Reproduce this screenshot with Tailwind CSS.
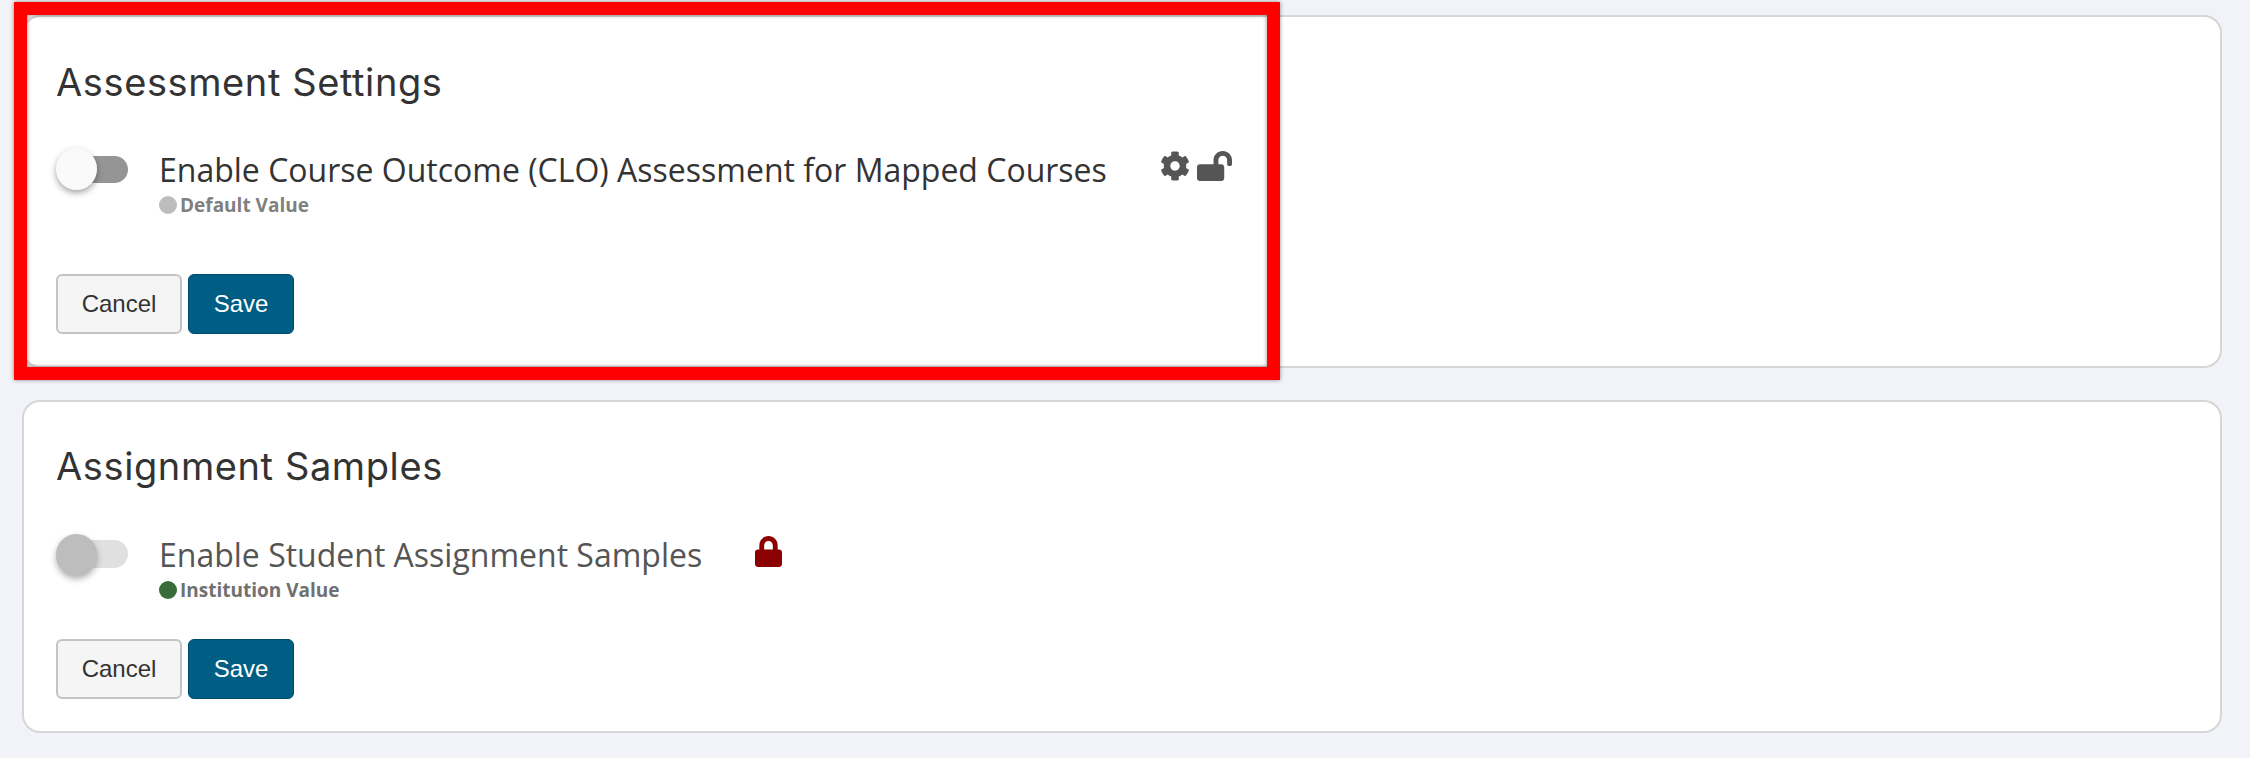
<!DOCTYPE html>
<html lang="en">
<head>
<meta charset="UTF-8">
<script src="https://cdn.jsdelivr.net/npm/@tailwindcss/browser@4"></script>
<title>Assessment Settings</title>
</head>
<body class="relative h-[758px] w-[2250px] overflow-hidden bg-[#f1f3f8]">
	<main class="flex flex-col gap-[32px] pl-[22px] pt-[15px]">
		<!-- Assessment card -->
		<section class="flex h-[353px] w-[2200px] flex-col rounded-[18px] border-2 border-[#d6d6d6] bg-white pl-[32px]">
			<h2 class="mt-[43px] font-['Inter',sans-serif] text-[38px] leading-[44px] tracking-[0.6px] text-[#333]">Assessment Settings</h2>
			<div class="mt-[44px] flex items-start">
				<div class="relative h-[44px] w-[72px] shrink-0">
					<div class="absolute left-[19px] top-[8px] h-[27px] w-[53px] rounded-full bg-[#959595]"></div>
					<div class="absolute left-0 top-0 h-[42px] w-[41px] rounded-full bg-[#fafafa] shadow-[0_3px_6px_rgba(0,0,0,0.35)]"></div>
				</div>
				<div class="ml-[31px] w-[1001px]">
					<p class="font-['Open_Sans',sans-serif] text-[32px] leading-[44px] text-[#333]">Enable Course Outcome (CLO) Assessment for Mapped Courses</p>
					<div class="mt-[1px] flex items-center gap-[3px]">
						<span class="h-[18px] w-[18px] rounded-full bg-[#bdbdbd]"></span>
						<span class="font-['Open_Sans',sans-serif] text-[19px] leading-[24px] font-bold text-[#808080]">Default Value</span>
					</div>
				</div>
				<div class="mt-[3px] flex items-start gap-[7px] text-[#555]">
					<svg class="h-[30px] w-[30px]" viewBox="0 0 512 512" fill="currentColor"><path d="M487.4 315.7l-42.6-24.6c4.3-23.2 4.3-47 0-70.2l42.6-24.6c4.9-2.8 7.1-8.6 5.5-14-11.1-35.6-30-67.8-54.7-94.6-3.8-4.1-10-5.1-14.8-2.3L380.8 110c-17.9-15.4-38.5-27.3-60.8-35.1V25.8c0-5.6-3.9-10.5-9.4-11.7-36.7-8.2-74.3-7.8-109.2 0-5.5 1.2-9.4 6.1-9.4 11.7V75c-22.2 7.9-42.8 19.8-60.8 35.1L88.7 85.5c-4.9-2.8-11-1.9-14.8 2.3-24.7 26.7-43.6 58.9-54.7 94.6-1.7 5.4.6 11.2 5.5 14L67.3 221c-4.3 23.2-4.3 47 0 70.2l-42.6 24.6c-4.9 2.8-7.1 8.6-5.5 14 11.1 35.6 30 67.8 54.7 94.6 3.8 4.1 10 5.1 14.8 2.3l42.6-24.6c17.9 15.4 38.5 27.3 60.8 35.1v49.2c0 5.6 3.9 10.5 9.4 11.7 36.7 8.2 74.3 7.8 109.2 0 5.5-1.2 9.4-6.1 9.4-11.7v-49.2c22.2-7.9 42.8-19.8 60.8-35.1l42.6 24.6c4.9 2.8 11 1.9 14.8-2.3 24.7-26.7 43.6-58.9 54.7-94.6 1.5-5.5-.7-11.3-5.6-14.1zM256 336c-44.1 0-80-35.9-80-80s35.9-80 80-80 80 35.9 80 80-35.9 80-80 80z"/></svg>
					<svg class="h-[30px] w-[35px]" viewBox="0 0 576 512" fill="currentColor" preserveAspectRatio="none"><path d="M423.5 0C339.5.3 272 69.5 272 153.5V224H48c-26.5 0-48 21.5-48 48v192c0 26.5 21.5 48 48 48h352c26.5 0 48-21.5 48-48V272c0-26.5-21.5-48-48-48h-48v-71.1c0-39.6 31.7-72.5 71.3-72.9 40-.4 72.7 32.1 72.7 72v80c0 13.3 10.7 24 24 24h32c13.3 0 24-10.7 24-24v-80C576 68 506-.3 423.5 0z"/></svg>
				</div>
			</div>
			<div class="mt-[57px] flex gap-[6px]">
				<button class="h-[60px] w-[126px] rounded-[6px] border-2 border-[#c4c4c4] bg-[#f5f5f5] font-['Liberation_Sans',sans-serif] text-[24px] text-[#333]">Cancel</button>
				<button class="h-[60px] w-[106px] rounded-[6px] border border-[#00496b] bg-[#005d84] font-['Liberation_Sans',sans-serif] text-[24px] text-white">Save</button>
			</div>
		</section>

		<!-- Samples card -->
		<section class="flex h-[333px] w-[2200px] flex-col rounded-[18px] border-2 border-[#d6d6d6] bg-white pl-[32px]">
			<h2 class="mt-[42px] font-['Inter',sans-serif] text-[38px] leading-[44px] tracking-[0.6px] text-[#333]">Assignment Samples</h2>
			<div class="mt-[45px] flex items-start">
				<div class="relative mt-[1px] h-[43px] w-[72px] shrink-0">
					<div class="absolute left-[19px] top-[6px] h-[28px] w-[53px] rounded-full bg-[#e0e0e0]"></div>
					<div class="absolute left-0 top-0 h-[42px] w-[41px] rounded-full bg-[#bdbdbd] shadow-[0_3px_6px_rgba(0,0,0,0.3)]"></div>
				</div>
				<div class="ml-[31px] w-[596px]">
					<p class="font-['Open_Sans',sans-serif] text-[32px] leading-[44px] text-[#555]">Enable Student Assignment Samples</p>
					<div class="mt-[1px] flex items-center gap-[3px]">
						<span class="h-[18px] w-[18px] rounded-full bg-[#3a6b3a]"></span>
						<span class="font-['Open_Sans',sans-serif] text-[19px] leading-[24px] font-bold text-[#707070]">Institution Value</span>
					</div>
				</div>
				<svg class="mt-[3px] h-[31px] w-[27px] text-[#8b0000]" viewBox="0 0 448 512" fill="currentColor"><path d="M400 224h-24v-72C376 68.2 307.8 0 224 0S72 68.2 72 152v72H48c-26.5 0-48 21.5-48 48v192c0 26.5 21.5 48 48 48h352c26.5 0 48-21.5 48-48V272c0-26.5-21.5-48-48-48zm-104 0H152v-72c0-39.7 32.3-72 72-72s72 32.3 72 72v72z"/></svg>
			</div>
			<div class="mt-[37px] flex gap-[6px]">
				<button class="h-[60px] w-[126px] rounded-[6px] border-2 border-[#c4c4c4] bg-[#f5f5f5] font-['Liberation_Sans',sans-serif] text-[24px] text-[#333]">Cancel</button>
				<button class="h-[60px] w-[106px] rounded-[6px] border border-[#00496b] bg-[#005d84] font-['Liberation_Sans',sans-serif] text-[24px] text-white">Save</button>
			</div>
		</section>
	</main>

	<!-- Red highlight laid over the first card -->
	<div class="pointer-events-none absolute left-[14px] top-[2px] h-[378px] w-[1266px] border-[13px] border-[#ff0000] shadow-[0_0_4px_rgba(0,0,0,0.45),inset_0_0_4px_rgba(0,0,0,0.45)]"></div>
</body>
</html>
